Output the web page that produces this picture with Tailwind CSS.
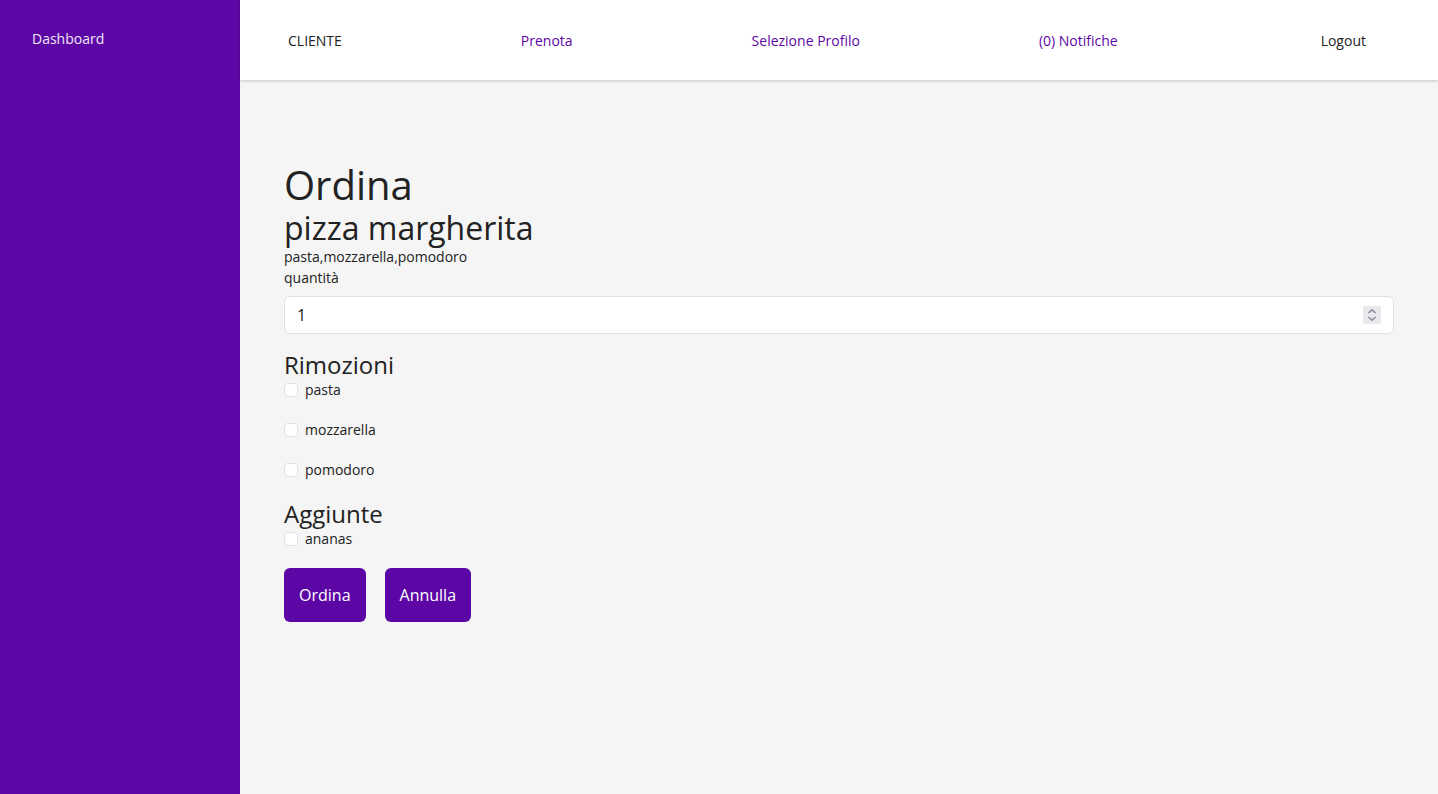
<!DOCTYPE html>
<html lang="it">
<head>
<meta charset="utf-8">
<meta name="viewport" content="width=device-width, initial-scale=1">
<title>Ordina</title>
<script src="https://cdn.jsdelivr.net/npm/@tailwindcss/browser@4"></script>
</head>
<body class="flex min-h-screen bg-[#f5f5f5] font-['Open_Sans','Noto_Sans',sans-serif] text-[14px] leading-[21px] text-[#222222]">
  <aside class="w-60 shrink-0 bg-[#5c07a5] px-8 py-7">
    <a href="#" class="text-white/90">Dashboard</a>
  </aside>
  <div class="min-w-0 flex-1">
    <header class="bg-white shadow-[0_1px_3px_rgba(0,0,0,0.2)]">
      <nav class="flex h-20 items-center justify-between px-12">
        <span>CLIENTE</span>
        <a href="#" class="text-[#5c07a5]">Prenota</a>
        <a href="#" class="text-[#5c07a5]">Selezione Profilo</a>
        <a href="#" class="text-[#5c07a5]">(0) Notifiche</a>
        <button type="button" class="px-6">Logout</button>
      </nav>
    </header>
    <main class="px-11 pt-20">
      <form>
        <h1 class="text-[40px] leading-[50px] font-medium">Ordina</h1>
        <h2 class="text-[32px] leading-9 font-medium">pizza margherita</h2>
        <p>pasta,mozzarella,pomodoro</p>
        <label for="quantita" class="mb-2 block">quantità</label>
        <div class="mb-4 flex h-[38px] items-center rounded-md border border-[#dee2e6] bg-white px-3">
          <input id="quantita" type="number" value="1" class="min-w-0 flex-1 appearance-none bg-transparent text-[16px] leading-6 outline-none [-moz-appearance:textfield] [&::-webkit-inner-spin-button]:appearance-none">
          <svg class="size-[18px] bg-[#e9e9ed]" viewBox="0 0 18 18" fill="none" stroke="#8f8f9d" stroke-width="1.6" aria-hidden="true">
            <path d="M5.3 7 9 3.9 12.7 7M5.3 11 9 14.1l3.7-3.1"/>
          </svg>
        </div>
        <h3 class="text-[24px] leading-[29px] font-medium">Rimozioni</h3>
        <div class="mb-[19px]"><label class="flex items-center gap-[7px]"><input type="checkbox" class="size-3.5 appearance-none rounded-[4px] border border-[#dee2e6] bg-white checked:bg-[#5c07a5]">pasta</label></div>
        <div class="mb-[19px]"><label class="flex items-center gap-[7px]"><input type="checkbox" class="size-3.5 appearance-none rounded-[4px] border border-[#dee2e6] bg-white checked:bg-[#5c07a5]">mozzarella</label></div>
        <div class="mb-[19px]"><label class="flex items-center gap-[7px]"><input type="checkbox" class="size-3.5 appearance-none rounded-[4px] border border-[#dee2e6] bg-white checked:bg-[#5c07a5]">pomodoro</label></div>
        <h3 class="text-[24px] leading-[29px] font-medium">Aggiunte</h3>
        <div class="mb-[19px]"><label class="flex items-center gap-[7px]"><input type="checkbox" class="size-3.5 appearance-none rounded-[4px] border border-[#dee2e6] bg-white checked:bg-[#5c07a5]">ananas</label></div>
        <div class="flex gap-[19px]">
          <button type="submit" class="rounded-md bg-[#5c07a5] p-[15px] text-[16px] leading-6 text-white">Ordina</button>
          <button type="button" class="rounded-md bg-[#5c07a5] p-[15px] text-[16px] leading-6 text-white">Annulla</button>
        </div>
      </form>
    </main>
  </div>
</body>
</html>
